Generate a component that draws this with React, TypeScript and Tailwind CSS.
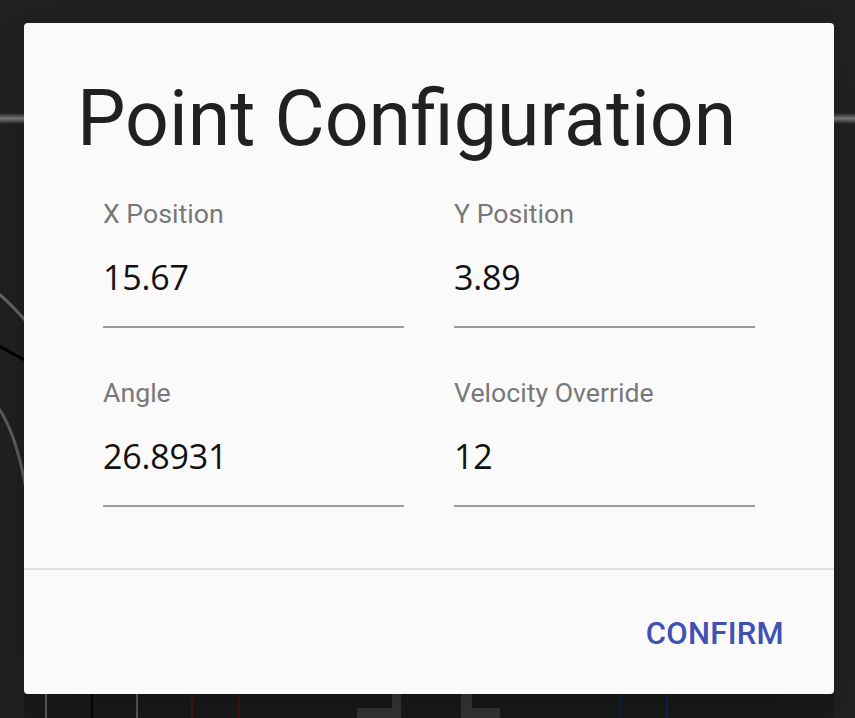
import React from 'react'

const fields = [
  { label: 'X Position', value: '15.67' },
  { label: 'Y Position', value: '3.89' },
  { label: 'Angle', value: '26.8931' },
  { label: 'Velocity Override', value: '12' },
]

function FieldBackdrop() {
  // the path-planner field that sits behind the dialog
  return (
    <svg className="absolute inset-0" width={855} height={718} viewBox="0 0 855 718">
      <defs>
        <linearGradient id="hline" x1="0" y1="0" x2="0" y2="1">
          <stop offset="0" stopColor="#222222" />
          <stop offset="0.5" stopColor="#7a7a7a" />
          <stop offset="1" stopColor="#222222" />
        </linearGradient>
      </defs>
      <rect x={24} y={694} width={810} height={24} fill="#1a1a1a" />
      <rect x={834} y={0} width={21} height={718} fill="#212121" />
      <rect x={0} y={113} width={855} height={11} fill="url(#hline)" />
      <path d="M -12 285 Q 8 300 30 326" stroke="#656565" strokeWidth={3} fill="none" />
      <path d="M -10 341 L 30 363" stroke="#000000" strokeWidth={3} fill="none" />
      <path d="M -6 402 Q 16 428 27 495" stroke="#5c5c5c" strokeWidth={3} fill="none" />
      <rect x={45} y={694} width={2} height={24} fill="#5a5a5a" />
      <rect x={91} y={694} width={2} height={24} fill="#050505" />
      <rect x={136} y={694} width={2} height={24} fill="#5a5a5a" />
      <rect x={191} y={694} width={2} height={24} fill="#4a1212" />
      <rect x={238} y={694} width={2} height={24} fill="#4a1212" />
      <path d="M 392 694 L 401 694 L 401 718 L 357 718 L 357 708 L 392 708 Z" fill="#363636" />
      <path d="M 461 694 L 472 694 L 472 708 L 500 708 L 500 718 L 461 718 Z" fill="#363636" />
      <rect x={619} y={694} width={2} height={24} fill="#0e2150" />
      <rect x={666} y={694} width={2} height={24} fill="#0e2150" />
    </svg>
  )
}

function Field({ label, value }: { label: string; value: string }) {
  return (
    <div className="flex flex-col">
      <label className="text-[26.7px] leading-[26px] text-[#787878] font-['Roboto',sans-serif]">{label}</label>
      <div className="mt-[33px] text-[34px] leading-[35px] tracking-[-0.005em] text-[#111111] font-['Open_Sans',sans-serif]">
        {value}
      </div>
      <div className="mt-[31px] h-[2px] bg-[#9c9c9c]" />
    </div>
  )
}

export default function App() {
  return (
    <div className="relative w-[855px] h-[718px] overflow-hidden bg-[#202020]">
      <FieldBackdrop />
      <div className="relative pt-[23px] pl-[24px]">
        <div className="flex flex-col w-[810px] h-[671px] rounded bg-[#fafafa] shadow-2xl font-['Roboto',sans-serif]">
          <h1 className="pt-[58px] pl-[53px] text-[77px] leading-[77px] text-[#212121] font-normal">
            Point Configuration
          </h1>
          <div className="mt-[43px] pl-[79px] grid grid-cols-[301px_301px] gap-x-[50px] gap-y-[52px]">
            {fields.map((f) => (
              <Field key={f.label} label={f.label} value={f.value} />
            ))}
          </div>
          <div className="mt-[61px] h-[2px] bg-[#e0e0e0]" />
          <div className="flex justify-end pr-[50px] pt-[48px]">
            <button className="text-[31px] leading-[31px] font-medium tracking-[0.01em] text-[#3f51b5] uppercase">
              Confirm
            </button>
          </div>
        </div>
      </div>
    </div>
  )
}
